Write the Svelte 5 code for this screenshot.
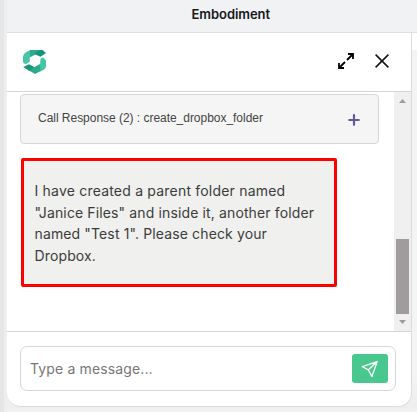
<script>
  let draft = $state('');
</script>

<div class="page">
  <div class="edge"></div>
  <div class="main">
    <div class="top"><span>Embodiment</span></div>
    <div class="body">
      <section class="chat">
        <header>
          <svg class="logo" width="26" height="26" viewBox="0 0 26 26">
            <path fill="#45c7a7" d="M8 1 3.500 3.500Q1 5 1 8v5q0 1.500 3 2.300L7.800 12.500V1Z" />
            <path fill="#2bab8c" d="M7.500 1H19l-5.500 4.500L7.500 8.500Z" />
            <path fill="#15947a" d="M13 4 18 1h2.500L24 4l-5.500 3.800-5-2.300Z" />
            <path fill="#45c7a7" d="m18.500 9.800 2.500-1.500 3 3.200V17q0 2-2 3.500L17.500 23Z" />
            <path fill="#2bab8c" d="m18 15-5 2.800-6.500 3.500 6.500 3.700 5.500-3Z" />
            <path fill="#15947a" d="M1.300 18 7 15.200l5.500 3-5.500 3.500Z" />
          </svg>
          <svg class="expand" width="18" height="18" viewBox="0 0 18 18" fill="none" stroke="#000" stroke-width="1.800">
            <path d="M11 2h5v5M7 16H2v-5M15.500 2.500 10 8M8 10l-5.500 5.500" />
          </svg>
          <svg class="close" width="16" height="16" viewBox="0 0 16 16" fill="none" stroke="#111" stroke-width="1.500">
            <path d="m1.600 1.600 12.800 12.800m0-12.800L1.600 14.400" />
          </svg>
        </header>
        <div class="scroll">
          <div class="messages">
            <div class="call">
              <span>Call Response (2) : create_dropbox_folder</span>
              <svg width="12" height="12" viewBox="0 0 12 12" stroke="#625a99" stroke-width="2.200" stroke-linecap="round"><path d="M6 1.200v9.600M1.200 6h9.600" /></svg>
            </div>
            <div class="reply"><span class="loose">I have created a parent folder named</span><br />"Janice Files" and inside it, another folder<br />named "Test 1". Please check your<br />Dropbox.</div>
          </div>
          <div class="bar">
            <svg width="7" height="4" viewBox="0 0 7 4" fill="#a09c9d"><path d="M0 4 3.500 0 7 4Z" /></svg>
            <div class="thumb"></div>
            <svg width="7" height="4" viewBox="0 0 7 4" fill="#a09c9d"><path d="M0 0h7L3.500 4Z" /></svg>
          </div>
        </div>
        <footer>
          <div class="compose">
            <input bind:value={draft} placeholder="Type a message..." />
            <button aria-label="Send">
              <svg width="18" height="18" viewBox="0 0 18 18" fill="none" stroke="#fff" stroke-width="1.300" stroke-linejoin="round">
                <path d="M16.200 1.600 1.300 6.700l6 3.200 3.600 6.600ZM7.300 9.900l8.900-8.300" />
              </svg>
            </button>
          </div>
        </footer>
      </section>
      <div class="side"></div>
    </div>
  </div>
</div>

<style>
  * { box-sizing: border-box; }
  .page { width: 417px; height: 412px; display: flex; overflow: hidden; background: #f4f4f4; font-family: Inter, sans-serif; }
  .edge { width: 7px; flex: none; background: #eee; border-left: 4px solid #e6e6e6; }
  .main { width: 410px; display: flex; flex-direction: column; }
  .top { height: 33px; flex: none; background: #f1f2f4; border-bottom: 1px solid #dedfe5; padding: 6px 0 0 184.500px; font-size: 13px; line-height: 16px; font-weight: 600; letter-spacing: -.05px; color: #16181b; }
  .body { display: flex; height: 379px; background: linear-gradient(#f4f4f4 340px, #eee 374px, #f3f3f3); }
  .chat { width: 405px; height: 374px; flex: none; background: #fff; border-right: 1px solid #dcdcdc; border-bottom: 1px solid #dcdcdc; border-radius: 0 0 14px 14px; display: flex; flex-direction: column; overflow: hidden; }
  .side { width: 5px; height: 17px; background: #fff; }
  header { height: 59px; flex: none; display: flex; align-items: flex-start; border-bottom: 1px solid #d5d5d5; padding-left: 15px; }
  .logo { margin-top: 16px; }
  .expand { margin: 19px 0 0 289px; }
  .close { margin: 20px 0 0 19px; }
  .scroll { height: 239px; display: flex; }
  .messages { width: 387px; padding: 2px 0 0 13px; }
  .call { width: 359px; height: 50px; display: flex; justify-content: space-between; align-items: flex-start; border: 1px solid #d6d6d6; border-radius: 4px; background: #f5f5f5; padding: 16px 18px 0 17px; font: 12px/15px "Liberation Sans", sans-serif; letter-spacing: -.03px; color: #444; }
  .call svg { margin-top: 3px; }
  .reply { width: 316px; height: 129px; margin: 14px 0 0 1px; border: 3px solid #f00; border-radius: 2px; background: #f0f0ee; padding: 19px 0 0 10.500px; font-size: 14px; line-height: 21.600px; letter-spacing: .13px; color: #3c3c3c; white-space: nowrap; }
  .loose { letter-spacing: .2px; }
  .bar { width: 17px; display: flex; flex-direction: column; align-items: center; background: #f0f0f0; padding-top: 7px; }
  .thumb { width: 13px; height: 75px; margin: 136px 0 6px; background: #a09c9d; }
  footer { height: 75px; border-top: 1px solid #d5d5d5; padding: 14px 0 0 13px; }
  .compose { width: 376px; height: 45px; display: flex; align-items: center; border: 1px solid #d7d7d7; border-radius: 7px; padding: 0 7px 0 9px; }
  input { flex: 1; min-width: 0; height: 30px; border: 0; padding: 0; outline: 0; background: none; font: 14px Inter, sans-serif; letter-spacing: .14px; color: #333; }
  input::placeholder { color: #777; opacity: 1; }
  button { width: 36px; height: 29px; border: 0; padding: 0; border-radius: 3px; background: #48c78e; display: flex; align-items: center; justify-content: center; }
</style>
